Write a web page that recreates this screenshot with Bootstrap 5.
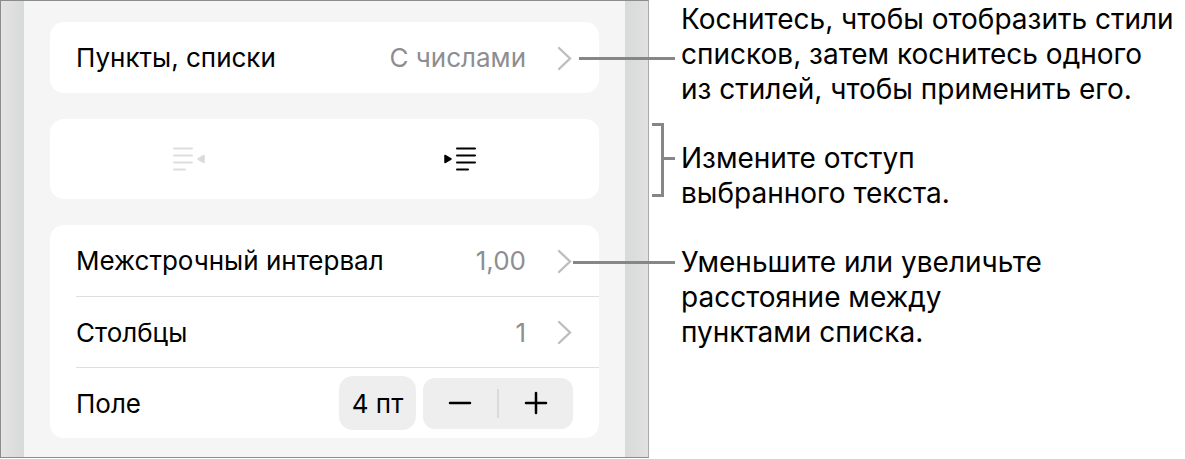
<!DOCTYPE html>
<html lang="ru">
<head>
<meta charset="utf-8">
<meta name="viewport" content="width=device-width, initial-scale=1">
<title>Списки</title>
<link href="https://cdn.jsdelivr.net/npm/bootstrap@5.3.0/dist/css/bootstrap.min.css" rel="stylesheet">
<style>
  body { font-family: Inter, "Liberation Sans", sans-serif; color: #000; background: #fff; font-size: 26px; line-height: 35px; }
  .layout { grid-template-columns: minmax(0, 649fr) minmax(0, 536fr); }
  .device { border: 1px solid #8c8c8e; border-right-color: #a9aaaa;
    background: linear-gradient(90deg, #e3e4e3, #d8dad9 23px, #d8dad9 calc(100% - 23px), #e0e1e0); padding: 0 23px; }
  .sheet { background: #f4f5f4; padding: 21px 26px 19px; gap: 26px; }
  .group { background: #fff; border-radius: 14px; }
  .setting { height: 71px; padding: 0 26px 0 0; margin-left: 26px; }
  .group .setting + .setting { border-top: 1px solid #dfdfe0; }
  button.setting { background: none; border: 0; color: #000; text-align: left; }
  .current { color: #8e8e92; }
  .chevron { width: 17px; height: 26px; margin-left: 30px; }
  .indent { height: 80px; }
  .indent button { background: none; border: 0; }
  .amount { width: 77px; height: 54px; border: 0; border-radius: 14px; background: #eeeeef; text-align: center; padding: 0; color: #000; }
  .stepper { width: 150px; height: 51px; border-radius: 12px; background: #eee; margin-left: 7px; }
  .stepper button { background: none; border: 0; padding: 0; }
  .divider { width: 2px; height: 29px; background: #dadadd; }
  .notes { padding: 2px 0 0 32px; gap: 34px; }
  .note { font-size: 28px; }
  .leader { position: absolute; right: 100%; margin-right: 6px; height: 3px; background: #868686; }
  .leader-styles { width: 96px; top: 55px; }
  .leader-spacing { width: 102px; top: 16px; }
  .leader-indent { width: 11px; top: 16px; }
  .bracket { position: absolute; right: 100%; margin-right: 17px; top: -18px; width: 12px; height: 74px; border: 3px solid #868686; border-left: 0; }
</style>
</head>
<body>
<div class="layout d-grid align-items-start">
  <main class="device">
    <div class="sheet d-flex flex-column">
      <section class="group d-flex flex-column">
        <button type="button" class="setting d-flex align-items-center">
          <span class="flex-grow-1">Пункты, списки</span><span class="current">С числами</span>
          <svg class="chevron" viewBox="0 0 17 26" fill="none" stroke="#bebec0" stroke-width="2.4" stroke-linecap="round" aria-hidden="true"><path d="M3 3l11 10.5L3 24"/></svg>
        </button>
      </section>
      <section class="group indent d-flex px-1">
        <button type="button" class="w-50 d-flex align-items-center justify-content-center" disabled aria-label="Уменьшить отступ">
          <svg width="32" height="26" viewBox="0 0 32 26" aria-hidden="true"><path d="M1 2.5h18M1 9.5h18M1 16.5h18M1 23.5h11" stroke="#dedede" stroke-width="2" stroke-linecap="round"/><path d="M31 9.5v7l-6-3.5z" fill="#dadada" stroke="#dadada" stroke-width="1.5" stroke-linejoin="round"/></svg>
        </button>
        <button type="button" class="w-50 d-flex align-items-center justify-content-center" aria-label="Увеличить отступ">
          <svg width="32" height="26" viewBox="0 0 32 26" aria-hidden="true"><path d="M13 2.5h18M13 9.5h18M13 16.5h18M13 23.5h11" stroke="#000" stroke-width="2" stroke-linecap="round"/><path d="M1 9.5v7l6-3.5z" fill="#000" stroke="#000" stroke-width="1.5" stroke-linejoin="round"/></svg>
        </button>
      </section>
      <section class="group d-flex flex-column">
        <button type="button" class="setting d-flex align-items-center">
          <span class="flex-grow-1">Межстрочный интервал</span><span class="current">1,00</span>
          <svg class="chevron" viewBox="0 0 17 26" fill="none" stroke="#bebec0" stroke-width="2.4" stroke-linecap="round" aria-hidden="true"><path d="M3 3l11 10.5L3 24"/></svg>
        </button>
        <button type="button" class="setting d-flex align-items-center">
          <span class="flex-grow-1">Столбцы</span><span class="current">1</span>
          <svg class="chevron" viewBox="0 0 17 26" fill="none" stroke="#bebec0" stroke-width="2.4" stroke-linecap="round" aria-hidden="true"><path d="M3 3l11 10.5L3 24"/></svg>
        </button>
        <div class="setting d-flex align-items-center">
          <label for="margin" class="flex-grow-1">Поле</label>
          <input id="margin" class="amount" type="text" value="4 пт">
          <div class="stepper d-flex align-items-center" role="group" aria-label="Поле">
            <button type="button" class="flex-fill h-100 d-flex align-items-center justify-content-center" aria-label="Меньше"><svg width="24" height="24" viewBox="0 0 24 24" aria-hidden="true"><path d="M2 12h20" stroke="#000" stroke-width="2.5" stroke-linecap="round"/></svg></button>
            <span class="divider"></span>
            <button type="button" class="flex-fill h-100 d-flex align-items-center justify-content-center" aria-label="Больше"><svg width="24" height="24" viewBox="0 0 24 24" aria-hidden="true"><path d="M2 12h20M12 2v20" stroke="#000" stroke-width="2.5" stroke-linecap="round"/></svg></button>
          </div>
        </div>
      </section>
    </div>
  </main>
  <aside class="notes d-flex flex-column">
    <p class="note position-relative text-nowrap m-0"><span class="leader leader-styles"></span>Коснитесь, чтобы отобразить стили<br>списков, затем коснитесь одного<br>из стилей, чтобы применить его.</p>
    <p class="note position-relative text-nowrap m-0"><span class="bracket"></span><span class="leader leader-indent"></span>Измените отступ<br>выбранного текста.</p>
    <p class="note position-relative text-nowrap m-0"><span class="leader leader-spacing"></span>Уменьшите или увеличьте<br>расстояние между<br>пунктами списка.</p>
  </aside>
</div>
<script src="https://cdn.jsdelivr.net/npm/bootstrap@5.3.0/dist/js/bootstrap.bundle.min.js"></script>
</body>
</html>
